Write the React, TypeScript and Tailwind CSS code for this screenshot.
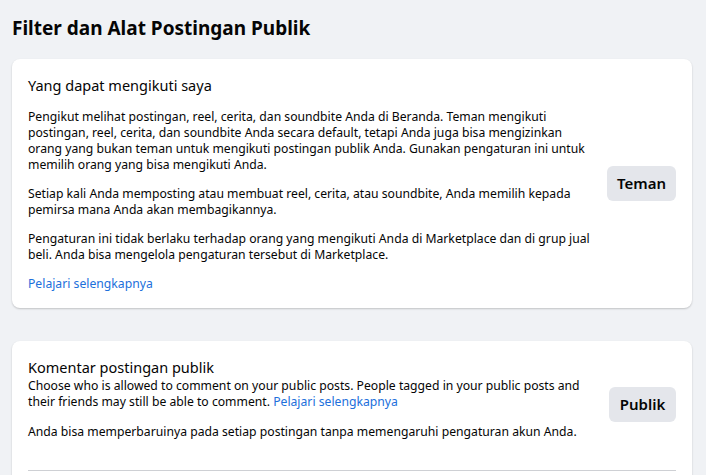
export default function App() {
  return (
    <div className="min-h-[475px] bg-[#f0f2f5] pl-3 pr-[14px] pt-[14px] text-[#050505] [font-family:'Noto_Sans',sans-serif]">
      <h1 className="text-[19px] font-bold leading-[28px]">Filter dan Alat Postingan Publik</h1>

      {/* Yang dapat mengikuti saya */}
      <div className="mt-[17px] rounded-lg bg-white px-4 pb-4 pt-4 shadow-[0_1px_2px_rgba(0,0,0,0.2)]">
        <div className="flex items-center gap-4">
          <div className="flex-1">
            <h2 className="text-[14.5px] leading-5">Yang dapat mengikuti saya</h2>
            <div className="mt-[14px] text-[12.2px] leading-[16px]">
              <p>
                Pengikut melihat postingan, reel, cerita, dan soundbite Anda di Beranda. Teman mengikuti<br />
                postingan, reel, cerita, dan soundbite Anda secara default, tetapi Anda juga bisa mengizinkan<br />
                orang yang bukan teman untuk mengikuti postingan publik Anda. Gunakan pengaturan ini untuk<br />
                memilih orang yang bisa mengikuti Anda.
              </p>
              <p className="mt-[13px]">
                Setiap kali Anda memposting atau membuat reel, cerita, atau soundbite, Anda memilih kepada<br />
                pemirsa mana Anda akan membagikannya.
              </p>
              <p className="mt-[13px]">
                Pengaturan ini tidak berlaku terhadap orang yang mengikuti Anda di Marketplace dan di grup jual<br />
                beli. Anda bisa mengelola pengaturan tersebut di Marketplace.
              </p>
              <p className="mt-[13px] text-[#216fdb]">Pelajari selengkapnya</p>
            </div>
          </div>
          <button className="h-[35px] w-[69px] rounded-md bg-[#e4e6eb] text-[15px] font-semibold">Teman</button>
        </div>
      </div>

      {/* Komentar postingan publik */}
      <div className="mt-[33px] rounded-lg bg-white px-4 pb-4 pt-4 shadow-[0_1px_2px_rgba(0,0,0,0.2)]">
        <div className="flex items-center gap-4">
          <div className="flex-1 pb-3">
            <h2 className="text-[14.5px] leading-5">Komentar postingan publik</h2>
            <div className="mt-px text-[12.2px] leading-[16px]">
              <p>
                Choose who is allowed to comment on your public posts. People tagged in your public posts and<br />
                their friends may still be able to comment. <span className="text-[#216fdb]">Pelajari selengkapnya</span>
              </p>
              <p className="mt-[14px]">Anda bisa memperbaruinya pada setiap postingan tanpa memengaruhi pengaturan akun Anda.</p>
            </div>
          </div>
          <button className="h-[35px] w-[67px] rounded-md bg-[#e4e6eb] text-[15px] font-semibold">Publik</button>
        </div>
        <div className="mt-[18px] border-t border-[#ced0d4]" />
        <div className="h-10" />
      </div>
    </div>
  );
}
